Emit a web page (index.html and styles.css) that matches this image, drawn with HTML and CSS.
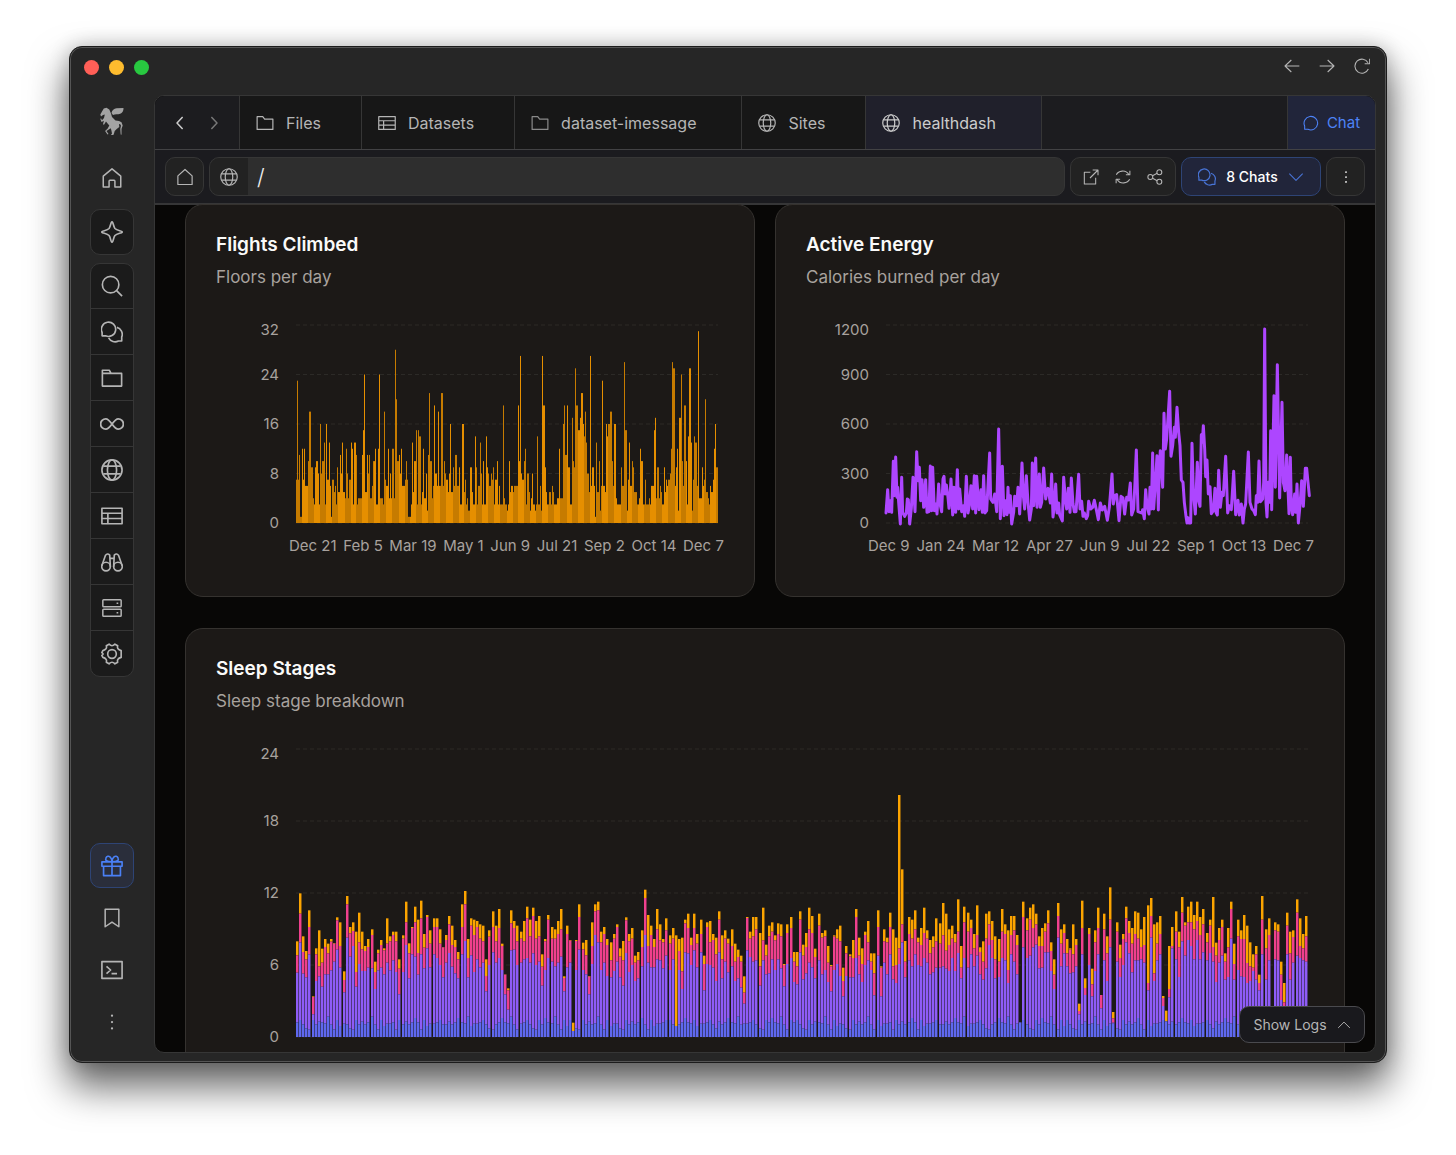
FILE: index.html
```html
<!DOCTYPE html>
<html lang="en">
<head>
<meta charset="utf-8">
<meta name="viewport" content="width=device-width, initial-scale=1">
<title>healthdash</title>
<link rel="stylesheet" href="styles.css">
</head>
<body>
<svg class="sprite" aria-hidden="true">
  <symbol id="back" viewBox="0 0 24 24"><path d="M23 12H1.500M11 3 1.500 12l9.500 9"/></symbol>
  <symbol id="forward" viewBox="0 0 24 24"><path d="M1 12h21.500M13 3l9.500 9-9.500 9"/></symbol>
  <symbol id="reload" viewBox="0 0 24 24"><path d="M21.500 16.500a10.500 10.500 0 1 1-.5-9.500M23.500 1v7.500h-7.500"/></symbol>
  <symbol id="left" viewBox="0 0 24 24"><path d="m15.500 4-7.500 8 7.500 8"/></symbol>
  <symbol id="right" viewBox="0 0 24 24"><path d="m8.500 4 7.500 8-7.500 8"/></symbol>
  <symbol id="down" viewBox="0 0 24 24"><path d="m2 7 10 10L22 7"/></symbol>
  <symbol id="up" viewBox="0 0 24 24"><path d="m2 17 10-10 10 10"/></symbol>
  <symbol id="home" viewBox="0 0 24 24"><path d="M1.500 9.800 12 1l10.500 8.800v13h-7v-7a1 1 0 0 0-1-1h-5a1 1 0 0 0-1 1v7h-7z"/></symbol>
  <symbol id="house" viewBox="0 0 24 24"><path d="M2.500 10.500 12 2l9.500 8.500V22h-19z"/></symbol>
  <symbol id="spark" viewBox="0 0 24 24"><path d="M12 .8c1.300 0 1.500 5.200 3.200 7.400C17.500 10.500 23.200 10.700 23.200 12s-5.700 1.500-8 3.800C13.500 18 13.300 23.200 12 23.200S10.500 18 8.800 15.800C6.500 13.500.8 13.300.8 12s5.700-1.500 8-3.800C10.500 6 10.700.8 12 .8z"/></symbol>
  <symbol id="search" viewBox="0 0 24 24"><circle cx="10.500" cy="10.500" r="9"/><path d="m17 17 6 6"/></symbol>
  <symbol id="chat" viewBox="0 0 24 24"><path d="M2.500 21.500V16.500A10.200 10.200 0 1 1 7.500 21.500z"/></symbol>
  <symbol id="chats" viewBox="0 0 24 24"><path d="M1.200 16.200V12.500A7.800 7.800 0 1 1 5 16.200z"/><path d="M17.300 7A7.600 7.600 0 0 1 22.600 17.300V21.800H19A8 8 0 0 1 8.300 18.500"/></symbol>
  <symbol id="folder" viewBox="0 0 24 24"><path d="M1.500 20.500v-17H9l2.500 3.200h11v13.800z"/></symbol>
  <symbol id="folder2" viewBox="0 0 24 24"><path d="M1.500 20.800V3.500H9l2 3.500h11.500v13.800zM1.500 7H11"/></symbol>
  <symbol id="loop" viewBox="0 0 24 24"><path d="M12 12c-2.500-3.500-4-5.200-6.200-5.200a5.200 5.200 0 0 0 0 10.400C8 17.200 9.500 15.500 12 12s4-5.200 6.200-5.200a5.200 5.200 0 0 1 0 10.400C16 17.200 14.500 15.500 12 12z"/></symbol>
  <symbol id="globe" viewBox="0 0 24 24"><circle cx="12" cy="12" r="11"/><ellipse cx="12" cy="12" rx="5" ry="11"/><path d="M2.500 7.800h19M2.500 16.200h19"/></symbol>
  <symbol id="table" viewBox="0 0 24 24"><path d="M1 3.500h22v17H1zM1 9h22M1 14.700h22M7.500 9v11.500"/></symbol>
  <symbol id="binoculars" viewBox="0 0 24 24"><circle cx="5.500" cy="17" r="4.700"/><circle cx="18.500" cy="17" r="4.700"/><path d="M.9 16 4.800 4.800Q7 2 9.500 4.500L10.200 17M23.100 16 19.200 4.800Q17 2 14.500 4.500L13.800 17M9.600 8h4.800"/></symbol>
  <symbol id="server" viewBox="0 0 24 24"><rect x="1" y="2" width="22" height="8.500" rx="1"/><rect x="1" y="13.500" width="22" height="8.500" rx="1"/><path d="M17.500 6.300h2M17.500 17.800h2"/></symbol>
  <symbol id="gear" viewBox="0 0 24 24"><circle cx="12" cy="12" r="4.700"/><path d="M8.800 1.300Q12 4.600 15.200 1.300L18.200 3Q17 7 22 8.300V12 15.700Q17 17 18.200 21L15.200 22.700Q12 19.400 8.800 22.700L5.800 21Q7 17 2 15.700L.9 13.500Q3.700 12 .9 10.500L2 8.300Q7 7 5.800 3z"/></symbol>
  <symbol id="gift" viewBox="0 0 24 24"><path d="M1 7.500h22v4.800H1zM2.800 12.300V22.500h18.400V12.300M12 7.500v15M12 7.500C5.500 7.500 4.500 5.500 5.300 3.500 6.200 1 8.500 1 9.800 2 11.300 3.200 12 5 12 7.500c0-2.500.7-4.300 2.200-5.500 1.300-1 3.600-1 4.500 1.500.8 2-.2 4-6.700 4z"/></symbol>
  <symbol id="bookmark" viewBox="0 0 24 24"><path d="M3.800 1.500h16.400v21L12 17l-8.200 5.500z"/></symbol>
  <symbol id="terminal" viewBox="0 0 24 24"><path d="M1 2.800h22v18.400H1zM6 8l4.500 4L6 16M11.500 16h6"/></symbol>
  <symbol id="dots" viewBox="0 0 24 24"><g class="solid"><circle cx="12" cy="3.500" r="1.500"/><circle cx="12" cy="12" r="1.500"/><circle cx="12" cy="20.500" r="1.500"/></g></symbol>
  <symbol id="open" viewBox="0 0 24 24"><path d="M11 5H2v17.500h17V13M14.500 1.500h8v8M22.500 1.500 10.500 13.500"/></symbol>
  <symbol id="sync" viewBox="0 0 24 24"><path d="M2 8.500C5 2.500 16 .5 20.500 8M22.300 2.500v6h-6M22 15.500c-3 6-14 8-18.500.5M1.700 21.500v-6h6"/></symbol>
  <symbol id="share" viewBox="0 0 24 24"><circle cx="5" cy="12" r="3.700"/><circle cx="18.500" cy="4.800" r="3.700"/><circle cx="18.500" cy="19.200" r="3.700"/><path d="m8.300 10.200 7-3.700M8.300 13.800l7 3.700"/></symbol>
  <symbol id="pegasus" viewBox="0 0 24 28"><g class="solid"><path d="M23.500 1c.2 3-1.300 5-3.300 5.800-2.500 1-5 .2-7.200 1.200L11.500 6c.5-3 2.500-4.500 5-4.800z"/><path d="M3.800 1.500 6.500.8 9.300 2.500l1.700 4 1 3.500 3.500 3.500 3.500.5 2.500 1.300 1.200 3.200-1.200 3.500v5.700l-.8-.2-.4-5.800.7-3-1-1.700-1 .3.3 2.700-2.600 2-2 2-1 3.500-2.800 2.200-.9-.4 2-2.800-.7-3.600-.6-1.600-4.200 2.800 2 3-1 .4-2.400-3.600 2.600-2.400 1.600-3-1.500-1.700L6 14.500l-2 3.200-1-.4.900-3.500L1.500 15 .3 11.700l.8-.3.9 1.800L4 11l.8-3.500L3 8 1 9.500.3 7.500 2 4.500z"/></g></symbol>
</svg>

<div class="window">
  <header class="titlebar">
    <div class="lights"><i class="red"></i><i class="amber"></i><i class="green"></i></div>
    <div class="history">
      <button aria-label="Back"><svg class="i16"><use href="#back"/></svg></button>
      <button aria-label="Forward"><svg class="i16"><use href="#forward"/></svg></button>
      <button aria-label="Reload"><svg class="i16"><use href="#reload"/></svg></button>
    </div>
  </header>

  <div class="shell">
    <nav class="sidebar" aria-label="Main">
      <a class="logo" href="#" aria-label="Start"><svg><use href="#pegasus"/></svg></a>
      <a class="plain home" href="#" aria-label="Home"><svg class="i20"><use href="#home"/></svg></a>
      <button class="tile" aria-label="New"><svg class="i22"><use href="#spark"/></svg></button>
      <div class="stack">
        <button aria-label="Search"><svg class="i22"><use href="#search"/></svg></button>
        <button aria-label="Chats"><svg class="i22"><use href="#chats"/></svg></button>
        <button aria-label="Files"><svg class="i22"><use href="#folder2"/></svg></button>
        <button aria-label="Loops"><svg class="i24"><use href="#loop"/></svg></button>
        <button aria-label="Sites"><svg class="i22"><use href="#globe"/></svg></button>
        <button aria-label="Datasets"><svg class="i22"><use href="#table"/></svg></button>
        <button aria-label="Browse"><svg class="i22"><use href="#binoculars"/></svg></button>
        <button aria-label="Servers"><svg class="i20"><use href="#server"/></svg></button>
        <button aria-label="Settings"><svg class="i22"><use href="#gear"/></svg></button>
      </div>
      <div class="bottom">
        <button class="tile gift" aria-label="Gift"><svg class="i22"><use href="#gift"/></svg></button>
        <button class="plain" aria-label="Bookmarks"><svg class="i20"><use href="#bookmark"/></svg></button>
        <button class="plain" aria-label="Terminal"><svg class="i22"><use href="#terminal"/></svg></button>
        <button class="plain" aria-label="More"><svg class="i18"><use href="#dots"/></svg></button>
      </div>
    </nav>

    <main class="panel">
      <div class="tabs">
        <div class="steps">
          <button aria-label="Previous"><svg class="i18"><use href="#left"/></svg></button>
          <button class="dim" aria-label="Next"><svg class="i18"><use href="#right"/></svg></button>
        </div>
        <button class="tab"><svg class="i18"><use href="#folder"/></svg>Files</button>
        <button class="tab"><svg class="i18"><use href="#table"/></svg>Datasets</button>
        <button class="tab wide"><svg class="i18 faint"><use href="#folder"/></svg>dataset-imessage</button>
        <button class="tab"><svg class="i18"><use href="#globe"/></svg>Sites</button>
        <button class="tab wide active"><svg class="i18"><use href="#globe"/></svg>healthdash</button>
        <button class="chat"><svg class="i16"><use href="#chat"/></svg>Chat</button>
      </div>

      <div class="toolbar">
        <button class="box square" aria-label="Site home"><svg class="i18"><use href="#house"/></svg></button>
        <label class="box url">
          <span class="scheme"><svg class="i18"><use href="#globe"/></svg></span>
          <input type="text" value="/" aria-label="Address">
        </label>
        <div class="box group">
          <button aria-label="Open"><svg class="i16"><use href="#open"/></svg></button>
          <button aria-label="Sync"><svg class="i16"><use href="#sync"/></svg></button>
          <button aria-label="Share"><svg class="i16"><use href="#share"/></svg></button>
        </div>
        <button class="box chats"><svg class="i18"><use href="#chats"/></svg>8 Chats<svg class="i16"><use href="#down"/></svg></button>
        <button class="box square more" aria-label="More"><svg class="i14"><use href="#dots"/></svg></button>
      </div>

      <div class="page">
        <section class="card">
          <h2>Flights Climbed</h2>
          <p>Floors per day</p>
          <div class="chart">
            <div class="scale"><span>32</span><span>24</span><span>16</span><span>8</span><span>0</span></div>
            <svg class="plot" id="flights" viewBox="0 0 422 198" preserveAspectRatio="none"></svg>
          </div>
          <div class="dates"><span>Dec 21</span><span>Feb 5</span><span>Mar 19</span><span>May 1</span><span>Jun 9</span><span>Jul 21</span><span>Sep 2</span><span>Oct 14</span><span>Dec 7</span></div>
        </section>
        <section class="card">
          <h2>Active Energy</h2>
          <p>Calories burned per day</p>
          <div class="chart">
            <div class="scale"><span>1200</span><span>900</span><span>600</span><span>300</span><span>0</span></div>
            <svg class="plot" id="energy" viewBox="0 0 1266 594" preserveAspectRatio="none"></svg>
          </div>
          <div class="dates early"><span>Dec 9</span><span>Jan 24</span><span>Mar 12</span><span>Apr 27</span><span>Jun 9</span><span>Jul 22</span><span>Sep 1</span><span>Oct 13</span><span>Dec 7</span></div>
        </section>
        <section class="card full">
          <h2>Sleep Stages</h2>
          <p>Sleep stage breakdown</p>
          <div class="chart tall">
            <div class="scale"><span>24</span><span>18</span><span>12</span><span>6</span><span>0</span></div>
            <svg class="plot" id="sleep" viewBox="0 0 3036 864" preserveAspectRatio="none"></svg>
          </div>
        </section>
      </div>
      <button class="logs">Show Logs<svg class="i14"><use href="#up"/></svg></button>
    </main>
  </div>
</div>
<script src="charts.js"></script>
</body>
</html>
```
FILE: styles.css
```css
* { box-sizing: border-box; }
body {
  margin: 0;
  height: 100vh;
  padding: 46px 69px 92px;
  background: #fff;
  color: #b5b5b5;
  font-family: Inter, "Liberation Sans", sans-serif;
  font-size: 15px;
  display: flex;
}
button { font: inherit; color: inherit; background: none; border: 0; padding: 0; display: flex; align-items: center; justify-content: center; }
svg { display: block; flex: none; fill: none; stroke: currentColor; stroke-width: 1.6; stroke-linejoin: round; }
.solid { fill: currentColor; stroke: none; }
.sprite { position: absolute; width: 0; height: 0; }
.i14 { width: 14px; height: 14px; }
.i16 { width: 16px; height: 16px; }
.i18 { width: 18px; height: 18px; }
.i20 { width: 20px; height: 20px; }
.i22 { width: 22px; height: 22px; }
.i24 { width: 24px; height: 24px; }

.window {
  flex: 1;
  min-width: 0;
  display: flex;
  flex-direction: column;
  background: #262626;
  border: 1px solid #1c1c1c;
  border-radius: 13px;
  padding: 0 10px 9px 0;
  box-shadow: inset 0 0 0 1px #555, 0 22px 38px 2px rgba(0, 0, 0, .6), 0 0 20px rgba(0, 0, 0, .2);
}
.titlebar { height: 48px; flex: none; padding: 0 6px 10px 14px; display: flex; justify-content: space-between; align-items: center; }
.lights { display: flex; gap: 10px; padding-top: 2px; }
.lights i { width: 15px; height: 15px; border-radius: 50%; }
.red { background: #ff5f57; }
.amber { background: #febc2e; }
.green { background: #28c840; }
.history { display: flex; gap: 19px; }

.shell { flex: 1; min-height: 0; display: flex; }
.sidebar { width: 84px; flex: none; display: flex; flex-direction: column; align-items: center; }
.sidebar svg { stroke-width: 1.8; }
.logo { color: #a3a3a3; margin-top: 12px; }
.logo svg { width: 24px; height: 28px; }
.plain { width: 44px; height: 52px; display: flex; align-items: center; justify-content: center; color: #b5b5b5; }
.home { margin: 17px 0 5px; }
.tile { width: 44px; height: 46px; border: 1px solid #363636; border-radius: 10px; background: #1b1b1b; }
.stack { width: 44px; margin-top: 8px; border: 1px solid #363636; border-radius: 10px; background: #1b1b1b; }
.stack button { width: 100%; height: 46px; border-top: 1px solid #363636; }
.stack button:first-child { height: 44px; border-top: 0; }
.bottom { margin-top: auto; margin-bottom: 5px; }
.gift { height: 45px; margin-bottom: 4px; color: #4a80f5; background: #2a2e3b; border-color: #2e4475; }

.panel {
  position: relative;
  flex: 1;
  min-width: 0;
  display: flex;
  flex-direction: column;
  overflow: hidden;
  background: #080706;
  border: 1px solid #363636;
  border-radius: 10px;
}
.tabs { height: 54px; flex: none; display: flex; background: #1c1c1f; border-bottom: 1px solid #424244; font-size: 16px; }
.steps { width: 84px; display: flex; align-items: center; justify-content: center; gap: 16px; color: #ccc; }
.steps svg { stroke-width: 2; }
.dim { color: #777; }
.tab { padding: 0 40px 0 16px; gap: 12px; background: #171717; border-left: 1px solid #363636; }
.wide { padding-right: 45px; }
.wide.active { background: #20202b; color: #ccc; border-right: 1px solid #363636; }
.faint { color: #8a8a8a; }
.chat { width: 88px; margin-left: auto; gap: 8px; background: #21253a; border-left: 1px solid #363636; color: #4d83f7; font-size: 15px; }
.toolbar { height: 55px; flex: none; padding: 0 10px; display: flex; align-items: center; gap: 5px; background: #1b1b1f; border-bottom: 2px solid #363637; }
.box { height: 39px; border: 1px solid #363636; border-radius: 10px; background: #222; display: flex; align-items: center; }
.square { width: 39px; }
.url { flex: 1; min-width: 0; overflow: hidden; background: #2e2e2e; }
.scheme { width: 38px; height: 100%; display: flex; align-items: center; justify-content: center; background: #222; }
.url input { flex: 1; min-width: 0; height: 37px; padding: 0 9px; border: 0; outline: 0; background: none; color: #f0f0f0; font: 300 22px Inter, sans-serif; }
.group { width: 106px; justify-content: center; gap: 16px; }
.chats { width: 140px; gap: 10px; justify-content: center; background: #21253a; border-color: #2e4475; color: #fff; font-size: 14px; font-weight: 500; }
.chats svg { color: #4874d6; }
.more { color: #fff; }

.page { flex: 1; min-height: 0; overflow: hidden; padding: 0 30px; margin-top: -1px; display: grid; grid-template-columns: 1fr 1fr; align-content: start; gap: 31px 20px; }
.card { min-width: 0; height: 393px; padding: 28px 30px; border: 1px solid #35322f; border-radius: 18px; background: #1c1917; color: #a8a29e; }
.full { grid-column: 1 / -1; height: 500px; }
.card h2 { margin: 0; color: #fafaf9; font-size: 19px; font-weight: 600; line-height: 24px; }
.card p { margin: 8px 0 0; font-size: 17px; line-height: 24px; }
.chart { display: flex; gap: 17px; height: 198px; margin: 36px 6px 0 0; }
.scale { width: 63px; flex: none; display: flex; flex-direction: column; justify-content: space-between; text-align: right; line-height: 20px; margin: -10px 0; }
.scale span { height: 20px; }
.scale span:first-child { line-height: 30px; }
.plot { flex: 1; min-width: 0; height: 100%; overflow: visible; stroke: none; }
.tall { height: 288px; }
.dates { display: flex; justify-content: space-between; margin: 13px 0 0 73px; line-height: 20px; white-space: nowrap; }
.early { margin-left: 62px; }
.grid { stroke: #2c2a27; stroke-width: 1; stroke-dasharray: 4 3; vector-effect: non-scaling-stroke; }
.line { fill: none; stroke: #ad46ff; stroke-width: 3; stroke-linejoin: round; stroke-linecap: round; vector-effect: non-scaling-stroke; }
.bar { fill: #e68f00; }
.bar.alt { fill: #c67b00; }
.awake { fill: #fca400; }
.rem { fill: #f0408d; }
.core { fill: #8e5cf7; }
.deep { fill: #5f68ef; }
.logs { position: absolute; right: 10px; bottom: 9px; width: 126px; height: 37px; gap: 10px; border: 1px solid #4a4a4e; border-radius: 10px; background: #19191d; font-size: 14px; }
```
FILE: charts.js
```js
const NS = "http://www.w3.org/2000/svg";
function add(parent, tag, attrs) {
  const el = document.createElementNS(NS, tag);
  for (const key in attrs) el.setAttribute(key, attrs[key]);
  parent.appendChild(el);
}
function grid(svg, width, height) {
  for (let i = 0; i < 5; i++) {
    add(svg, "path", { class: "grid", d: `M0 ${height * i / 4}H${width}` });
  }
}

// Floors climbed, one value per day.
const floors = `7 23 7 11 1 12 7 12 6 6 10 18 18 9 4 3 9 10 8 3 16 8 10 13 3 16 7 13 6 1 7 5 6 3 9 5 11 8 13 5 4 12 8 4 7 13 12 3 13 11 3 4 4 4 11 15 24 5 11 8 11 4 6 10 10 12 3 12 24 4 4 3 18 7 6 12 4 8 4 12 4 28 20 10 11 8 12 6 6 7 10 7 1 1 3 13 5 10 15 3 15 14 3 5 12 4 8 2 11 21 10 4 6 19 8 6 18 6 6 21 6 10 8 7 5 8 16 5 9 6 11 11 6 9 3 3 16 5 7 3 4 2 9 9 5 3 14 9 3 6 13 8 3 10 3 14 9 8 6 8 7 9 3 7 10 3 6 3
3 19 4 3 2 3 10 5 6 5 6 6 6 19 10 27 8 7 10 12 3 8 5 2 4 8 3 2 3 14 3 6 2 27 19 9 5 3 3 5 3 6 5 3 3 4 4 12 4 4 16 19 11 19 9 9 3 17 10 9 25 19 15 15 17 21 16 14 18 13 8 5 27 6 9 6 1 13 5 10 2 6 23 6 5 16 14 16 18 18 10 6 16 4 3 3 3 9 6 6 26 15 2 7 13 6 10 9 5 5 3 3 4 12 10 3 3 7 3 3 4 3 6 6 15 17 4 9 4 6 5 3 9 5 7 6 7 8 12 26 25 6 9 12 2 17 24 10 6 19 10 3 14 25 13 2 7 14 13 6 31 4 4 9 6 7 20 5 4 3 6 5 7 12 16 9`.split(/\s+/).map(Number);
const flights = document.getElementById("flights");
grid(flights, 422, 198);
const day = 422 / floors.length;
floors.forEach((n, i) => {
  const x = Math.floor(i * day);
  const h = n * 198 / 32;
  add(flights, "rect", { class: Math.floor(x / 6) % 2 ? "bar" : "bar alt", x, y: 198 - h, width: Math.floor((i + 1) * day) - x, height: h });
});

// Energy trace: horizontal position and level pairs, baseline at 622.
const energy = `48,592 53,522 57,588 61,555 65,590 70,437 73,540 77,424 81,545 83,515 86,560 91,625 95,485 98,590 104,602 109,592 112,550 115,552 119,625 124,578 129,485 135,588 140,408 144,495 148,455 152,555 156,492 161,575 167,492 171,590 177,588 181,451 185,585 188,455 193,585 198,565 201,595 206,505 210,565 215,588 219,490 222,482 225,535 229,508 234,545 237,578 240,545 243,490 248,598 252,515 257,590 262,462 266,580 269,520 275,588 280,570 284,602 289,482 294,592 298,570 303,510 308,580 313,480 317,592 320,482 327,582 333,522 337,590 341,480 345,592 350,585 354,510 359,412 362,550 369,560 374,535 380,588 386,340 391,609 397,452 402,600 407,555 411,597 414,515 417,590 421,540 425,625 431,590 434,542 440,570 444,515 449,595 456,442 460,540 464,580 469,480 474,560 479,613 484,580 487,442 491,570 497,427 501,575 508,475 511,575 515,560 521,457 527,550 530,530 534,518 541,562 545,475 549,604 553,570 557,505 561,592 566,562 569,598 577,616 581,485 587,560 590,580 595,518 600,590 604,487 609,565 613,588 618,588 626,476 630,580 635,557 639,602 643,592 649,609 653,600 656,557 662,580 668,575 673,554 679,582 685,612 691,562 697,583 704,572 712,614 718,575 726,475 730,565 734,540 740,537 747,615 753,542 759,547 764,595 770,545 775,553 781,502 785,598 791,580 795,500 799,403 804,588 810,590 816,592 818,582 823,609 827,522 831,570 837,595 840,515 844,580 848,412 851,580 857,490 861,420 865,583 868,450 871,405 878,515 882,293 886,400 890,370 899,227 903,422 908,390 913,335 916,365 921,275 926,350 930,390 934,493 939,500 943,560 948,602 951,622 954,606 957,622 962,622 966,383 970,530 976,595 982,440 986,555 990,572 994,357 997,380 1000,330 1004,400 1007,483 1011,433 1015,535 1020,513 1024,594 1030,585 1035,518 1038,590 1042,598 1046,464 1051,575 1056,530 1060,540 1067,422 1073,592 1078,570 1084,582 1091,467 1097,597 1104,554 1108,598 1114,565 1119,622 1123,580 1127,565 1135,409 1140,560 1146,580 1151,585 1156,597 1159,540 1163,560 1167,436 1171,558 1178,550 1181,500 1184,40 1188,560 1191,604 1195,500 1199,560 1202,345 1205,582 1212,240 1216,515 1222,147 1229,547 1236,260 1240,500 1245,525 1250,418 1257,594 1261,425 1264,570 1268,597 1274,535 1277,590 1281,505 1285,622 1290,570 1295,495 1300,572 1306,458 1310,458 1314,500 1318,540`.split(" ").map(p => p.split(",").map(Number));
const energySvg = document.getElementById("energy");
grid(energySvg, 1266, 594);
add(energySvg, "path", { class: "line", d: "M" + energy.map(([x, y]) => `${x - 48} ${y - 28}`).join("L") });

// Sleep per night: top edges of awake, REM and core, baseline at 768 and 36 units per hour.
const nights = `481,523,575 337,398,484 466,513,578 510,535,589 388,438,520 646,648,700 502,520,600 448,556,586 503,545,617 474,498,580 488,517,580 474,482,568 486,488,542 409,418,506 424,495,560 571,597,634 345,370,470 438,457,527 424,450,495 452,573,617 395,484,549 452,505,570 495,510,570 474,498,560 445,462,562 542,573,624 506,517,568 477,492,560 502,508,580 412,488,545 466,481,568 452,462,538 452,481,573 535,563,640 463,473,573 362,424,492 487,517,592 438,441,520 377,424,527 416,516,581 359,412,520 459,500,562 402,408,502 448,488,559 412,438,520 412,438,531 445,488,552 498,499,589 462,477,545 405,430,516 434,492,557 477,498,577 513,535,592 370,438,520 330,370,480 474,531,589 412,434,523 416,462,573 420,438,535 430,473,559 434,481,545 535,585,631 448,467,552 391,438,514 434,481,545 384,441,531 488,495,567 580,581,640 622,628,686 388,427,508 420,441,506 434,481,552 452,473,545 420,481,535 377,412,531 416,466,545 380,405,517 420,473,552 405,466,542 520,557,614 474,481,567 402,416,531 438,473,542 445,473,556 420,459,545 384,445,527 586,591,631 434,459,559 477,479,545 725,750,750 477,480,567 370,408,506 485,505,567 477,523,580 585,587,640 424,495,549 370,391,462 362,388,484 452,484,567 438,459,545 474,492,585 484,538,589 459,473,570 430,438,542 502,527,589 480,538,614 409,418,516 459,481,573 441,473,552
524,545,600 513,538,592 448,498,556 326,351,462 402,495,545 434,462,559 474,498,559 384,445,535 430,478,538 474,484,562 412,448,524 463,488,567 441,473,535 463,735,735 474,510,567 470,571,624 416,427,514 398,441,517 470,492,552 398,441,508 459,488,559 416,459,514 524,549,628 424,438,549 420,484,552 459,477,560 470,520,600 391,416,514 463,535,592 448,473,542 473,488,574 445,495,556 488,542,600 506,528,592 524,542,620 586,635,668 408,411,508 452,473,528 408,466,542 408,445,538 456,556,614 380,478,538 491,524,580 434,466,577 424,452,535 463,478,567 427,459,535 430,466,562 549,552,616 430,456,549 408,441,531 513,542,603 513,556,610 391,416,514 491,524,595 456,498,577 380,445,545 405,456,559 503,528,592 398,434,538 456,470,580 448,466,567 495,545,603 552,556,631 463,467,567 445,473,549 434,481,585 560,600,646 495,517,585 520,526,589 477,531,589 384,408,531 470,524,580 502,549,603 452,462,552 420,484,538 517,542,567 517,577,643 388,438,524 556,560,646 445,481,545 470,484,580 395,438,520 445,556,595 470,552,606 42,502,549 265,430,484 480,542,589 408,459,538 416,473,556 388,445,520 470,484,552 441,492,556 380,456,531 448,473,545 477,517,580 466,499,574 412,481,560 427,488,560 366,463,556 398,509,563 445,492,570 434,473,531 459,485,570 355,452,516 495,560,592 377,424,531 395,452,560 416,441,520 459,502,556 373,462,524
499,513,580 481,542,596 398,473,562 391,430,492 420,477,531 466,535,592 474,542,588 384,452,531 430,459,538 448,567,606 405,462,520 405,448,542 462,492,580 724,724,724 362,408,499 412,448,531 380,416,524 370,441,499 398,430,491 466,495,562 441,495,560 427,452,514 388,427,514 484,510,570 535,581,624 366,405,470 445,488,556 430,456,517 474,517,556 502,506,577 430,520,574 474,492,556 668,690,700 359,441,520 592,621,642 441,459,552 563,610,646 448,484,570 380,441,520 642,642,682 398,445,538 466,517,600 319,416,499 693,712,725 424,452,542 491,531,588 459,474,552 377,412,484 420,456,517 441,488,574 391,459,538 395,473,538 445,498,535 408,492,545 373,606,628 351,405,470 430,577,600 424,488,538 405,459,520 645,651,675 689,721,721 495,624,649 438,495,502 391,452,535 452,499,588 348,395,481 424,434,524 377,424,477 362,424,495 402,445,535 362,420,477 408,462,535 384,430,514 456,484,538 416,434,516 348,498,542 485,524,603 441,477,545 416,438,524 517,542,596 441,499,588 362,384,473 488,549,596 416,466,567 448,474,586 402,474,588 434,546,606 484,556,600 520,560,570 495,520,596 581,606,628 345,416,520 445,502,596 412,462,538 768,768,768 424,448,535 430,452,538 542,581,657 606,664,680 395,434,520 452,517,596 448,468,545 355,395,524 412,495,531 459,502,538 405,466,542`.split(/\s+/).map(n => n.split(",").map(Number));
const sleep = document.getElementById("sleep");
grid(sleep, 3036, 864);
const night = 3036 / nights.length;
const deepTops = [724, 742, 730, 724, 727, 745, 728, 717, 746, 722, 711, 707, 717, 728, 730, 717, 730, 724, 731, 735];
nights.forEach(([awake, rem, core], i) => {
  const deep = Math.max(core, deepTops[(i * 7 + (i >> 3)) % deepTops.length]);
  const x = Math.round(i * night / 3) * 3;
  [["awake", awake, rem], ["rem", rem, core], ["core", core, deep], ["deep", deep, 768]].forEach(([name, from, to]) => {
    if (to > from) add(sleep, "rect", { class: name, x, y: from + 96, width: 7.4, height: to - from });
  });
});
```
